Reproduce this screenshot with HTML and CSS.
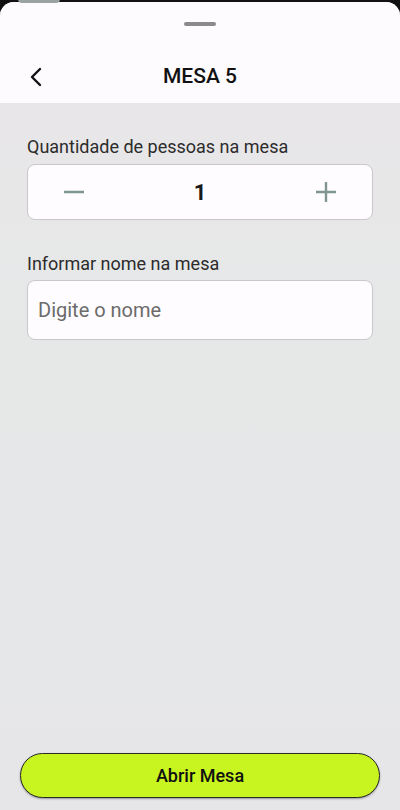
FILE: index.html
```html
<!DOCTYPE html>
<html lang="pt-BR">
<head>
  <meta charset="UTF-8">
  <title>Mesa 5</title>
  <link rel="stylesheet" href="styles.css">
</head>
<body>

  <div class="backdrop-tab"></div>

  <div class="sheet">
    <div class="sheet-top">
      <div class="handle"></div>
      <div class="header">
        <button class="back" aria-label="Voltar">
          <svg width="14" height="20" viewBox="0 0 14 20">
            <path d="M11 2 L3 10 L11 18" fill="none" stroke="#111" stroke-width="2.4" stroke-linecap="round" stroke-linejoin="round"/>
          </svg>
        </button>
        <h1 class="title">MESA 5</h1>
      </div>
    </div>

    <div class="content">
      <label class="field-label">Quantidade de pessoas na mesa</label>
      <div class="stepper">
        <button class="step-btn" aria-label="Diminuir">
          <svg width="22" height="22" viewBox="0 0 22 22">
            <path d="M1 11 H21" stroke="#809590" stroke-width="2.4"/>
          </svg>
        </button>
        <span class="count">1</span>
        <button class="step-btn" aria-label="Aumentar">
          <svg width="22" height="22" viewBox="0 0 22 22">
            <path d="M1 11 H21 M11 1 V21" stroke="#809590" stroke-width="2.4"/>
          </svg>
        </button>
      </div>

      <label class="field-label second" for="nome">Informar nome na mesa</label>
      <input class="name-input" id="nome" type="text" placeholder="Digite o nome">

      <div class="spacer"></div>

      <button class="open-btn">Abrir Mesa</button>
    </div>
  </div>

</body>
</html>
```

FILE: styles.css
```css
html, body {
  margin: 0;
  height: 100%;
}

body {
  font-family: Roboto, "Noto Sans", sans-serif;
  background-color: #111;
  position: relative;
  overflow: hidden;
}

.backdrop-tab {
  position: absolute;
  top: -6px;
  left: 18px;
  width: 42px;
  height: 9px;
  border-radius: 4px;
  background-color: #9aa3a0;
}

.sheet {
  height: 808px;
  margin-top: 2px;
  border-radius: 14px 14px 0 0;
  overflow: hidden;
  display: flex;
  flex-direction: column;
  background: linear-gradient(#e9e5e8, #e6e8e8 40%, #e6e6e8);
}

.sheet-top {
  background-color: #fdfbfd;
  height: 101px;
  display: flex;
  flex-direction: column;
}

.handle {
  width: 32px;
  height: 4px;
  border-radius: 2px;
  background-color: #8a8a8c;
  margin: 20px auto 0;
}

.header {
  position: relative;
  display: flex;
  align-items: center;
  justify-content: center;
  margin-top: 37px;
  height: 26px;
}

.back {
  position: absolute;
  left: 29px;
  top: 4px;
  border: none;
  background: none;
  padding: 0;
}

.title {
  margin: 0;
  font-size: 21px;
  font-weight: 500;
  color: #111;
}

.content {
  flex: 1;
  display: flex;
  flex-direction: column;
  padding: 33px 27px 12px;
}

.field-label {
  font-size: 18px;
  color: #2c2c2c;
  line-height: 22px;
}

.field-label.second {
  margin-top: 33px;
}

.stepper {
  margin-top: 6px;
  height: 54px;
  background-color: #fefcfe;
  border: 1px solid #c9c7c9;
  border-radius: 8px;
  display: flex;
  align-items: center;
  justify-content: space-between;
  padding: 0 35px 0 35px;
}

.step-btn {
  border: none;
  background: none;
  padding: 0;
  display: flex;
}

.count {
  font-size: 22px;
  font-weight: 700;
  color: #1a1a1a;
}

.name-input {
  margin-top: 5px;
  height: 60px;
  box-sizing: border-box;
  border: 1px solid #c9c7c9;
  border-radius: 8px;
  background-color: #fefcfe;
  padding: 0 10px;
  font-family: Roboto, "Noto Sans", sans-serif;
  font-size: 20px;
  color: #222;
  outline: none;
}

.name-input::placeholder {
  color: #6b6b6b;
}

.spacer {
  flex: 1;
}

.open-btn {
  margin: 0 -7px;
  height: 45px;
  border: 1px solid #2a2a2a;
  border-radius: 23px;
  background-color: #c8f51f;
  box-shadow: 0 1px 2px rgba(0, 0, 0, 0.35);
  font-family: Roboto, "Noto Sans", sans-serif;
  font-size: 18px;
  font-weight: 500;
  color: #111;
}
```
